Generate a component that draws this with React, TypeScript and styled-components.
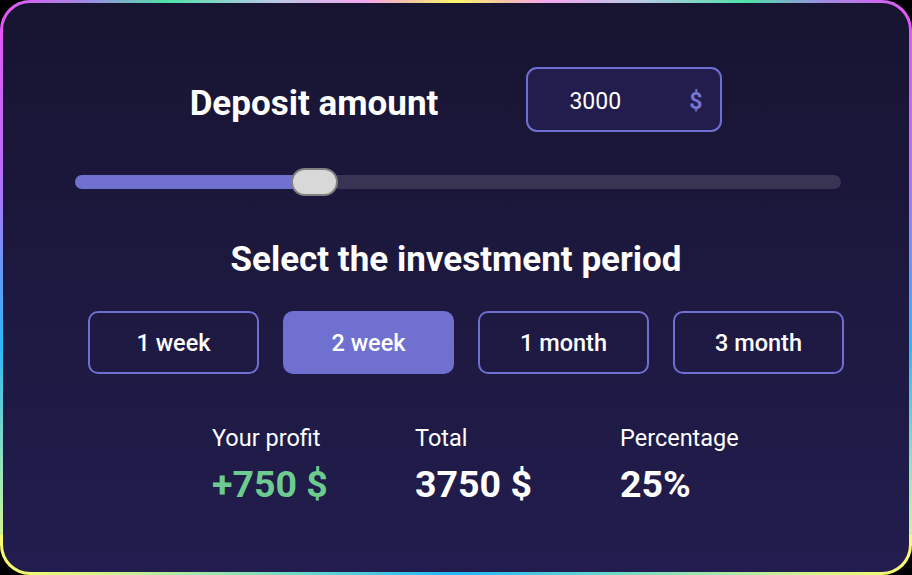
import React, { useState } from "react";
import styled, { createGlobalStyle } from "styled-components";

const GlobalStyle = createGlobalStyle`
  html, body { margin: 0; padding: 0; background: #000; }
  body { font-family: Roboto, "Liberation Sans", Arial, sans-serif; }
  * { box-sizing: border-box; }
`;

const Frame = styled.div`
  width: 912px;
  height: 575px;
  padding: 3px;
  border-radius: 30px;
  background:
    linear-gradient(90deg, #e455f5 0%, #9b8ee0 10%, #4fe0a8 18%, #b9c9e6 30%, #f6a6f0 40%, #f5c6a0 45%, #f8f86a 50%, #f5c6a0 55%, #f6a6f0 60%, #b9c9e6 70%, #4fe0a8 82%, #9b8ee0 90%, #e455f5 100%) top / 100% 40px no-repeat,
    linear-gradient(90deg, #fbfb6c 0%, #c6ef95 15%, #5fd6d0 35%, #27b6f6 50%, #5fd6d0 65%, #c6ef95 85%, #fbfb6c 100%) bottom / 100% 40px no-repeat,
    linear-gradient(180deg, #e455f5 0%, #b86ef8 30%, #2bb7f6 60%, #a7ebb0 85%, #f8fb76 100%);
`;

const Card = styled.div`
  height: 100%;
  border-radius: 27px;
  background: linear-gradient(180deg, #171431 0%, #221d4e 100%);
  display: flex;
  flex-direction: column;
  color: #fff;
`;

const DepositRow = styled.div`
  margin-top: 64px;
  display: flex;
  justify-content: center;
  align-items: center;
  gap: 88px;
`;

const Heading = styled.h2<{ $drop?: number }>`
  margin: 0;
  padding-top: ${(p) => p.$drop ?? 0}px;
  font-size: 35px;
  line-height: 42px;
  font-weight: 700;
  color: #fff;
  text-align: center;
`;

const AmountBox = styled.label`
  width: 196px;
  height: 65px;
  border: 2px solid #6e6fd0;
  border-radius: 11px;
  background: #221d4d;
  display: flex;
  align-items: center;
  padding: 3px 18px 0 41px;
`;

const AmountInput = styled.input`
  flex: 1;
  min-width: 0;
  padding: 0;
  border: none;
  outline: none;
  background: transparent;
  color: #fff;
  font-family: Roboto, "Liberation Sans", Arial, sans-serif;
  font-size: 23px;
`;

const Currency = styled.span`
  color: #7474d2;
  font-weight: 700;
  font-size: 23px;
`;

const SliderRow = styled.div`
  margin: 36px 68px 0 72px;
  height: 28px;
  display: flex;
  align-items: center;
`;

const Track = styled.div`
  position: relative;
  width: 100%;
  height: 14px;
  border-radius: 7px;
  background: #393354;
`;

const Fill = styled.div`
  height: 100%;
  border-radius: 7px;
  background: #6f70cf;
`;

const Thumb = styled.div`
  position: absolute;
  top: -7px;
  width: 47px;
  height: 28px;
  border-radius: 14px;
  background: #d8d8d8;
  border: 2px solid #808080;
`;

const PeriodSection = styled.div`
  margin-top: 43px;
  display: flex;
  flex-direction: column;
  align-items: center;
`;

const PeriodRow = styled.div`
  margin-top: 30px;
  align-self: flex-start;
  padding-left: 85px;
  display: flex;
  gap: 24px;
`;

const PeriodButton = styled.button<{ $active: boolean }>`
  width: 171px;
  height: 63px;
  padding: 0;
  border-radius: 10px;
  border: 2px solid #6e6fd0;
  background: ${(p) => (p.$active ? "#6f70cf" : "transparent")};
  color: #fff;
  font-family: Roboto, "Liberation Sans", Arial, sans-serif;
  font-size: 23.5px;
  font-weight: 500;
  cursor: pointer;
`;

const Stats = styled.div`
  margin-top: 51px;
  padding-left: 209px;
  display: grid;
  grid-template-columns: 203px 205px auto;
`;

const Stat = styled.div`
  display: flex;
  flex-direction: column;
  gap: 11px;
`;

const StatLabel = styled.span`
  font-size: 23.5px;
  line-height: 27px;
  color: #fff;
`;

const StatValue = styled.span<{ $green?: boolean }>`
  font-size: 37.5px;
  line-height: 42px;
  font-weight: 700;
  color: ${(p) => (p.$green ? "#6dcb8f" : "#fff")};
`;

const periods = [
  { label: "1 week", rate: 0.1 },
  { label: "2 week", rate: 0.25 },
  { label: "1 month", rate: 0.5 },
  { label: "3 month", rate: 1.2 },
];

export default function App() {
  const [amount, setAmount] = useState(3000);
  const [active, setActive] = useState(1);
  const max = 10000;
  const pct = amount / max;
  const rate = periods[active].rate;
  const profit = Math.round(amount * rate);

  return (
    <>
      <GlobalStyle />
      <Frame>
        <Card>
          <DepositRow>
            <Heading $drop={9}>Deposit amount</Heading>
            <AmountBox>
              <AmountInput
                value={amount}
                onChange={(e) => setAmount(Number(e.target.value) || 0)}
              />
              <Currency>$</Currency>
            </AmountBox>
          </DepositRow>
          <SliderRow>
            <Track>
              <Fill style={{ width: `calc(${pct * 100}% + ${23 - pct * 47}px)` }} />
              <Thumb style={{ left: `calc(${pct * 100}% - ${pct * 47}px)` }} />
            </Track>
          </SliderRow>
          <PeriodSection>
            <Heading>Select the investment period</Heading>
            <PeriodRow>
              {periods.map((p, i) => (
                <PeriodButton key={p.label} $active={i === active} onClick={() => setActive(i)}>
                  {p.label}
                </PeriodButton>
              ))}
            </PeriodRow>
          </PeriodSection>
          <Stats>
            <Stat>
              <StatLabel>Your profit</StatLabel>
              <StatValue $green>+{profit} $</StatValue>
            </Stat>
            <Stat>
              <StatLabel>Total</StatLabel>
              <StatValue>{amount + profit} $</StatValue>
            </Stat>
            <Stat>
              <StatLabel>Percentage</StatLabel>
              <StatValue>{Math.round(rate * 100)}%</StatValue>
            </Stat>
          </Stats>
        </Card>
      </Frame>
    </>
  );
}
